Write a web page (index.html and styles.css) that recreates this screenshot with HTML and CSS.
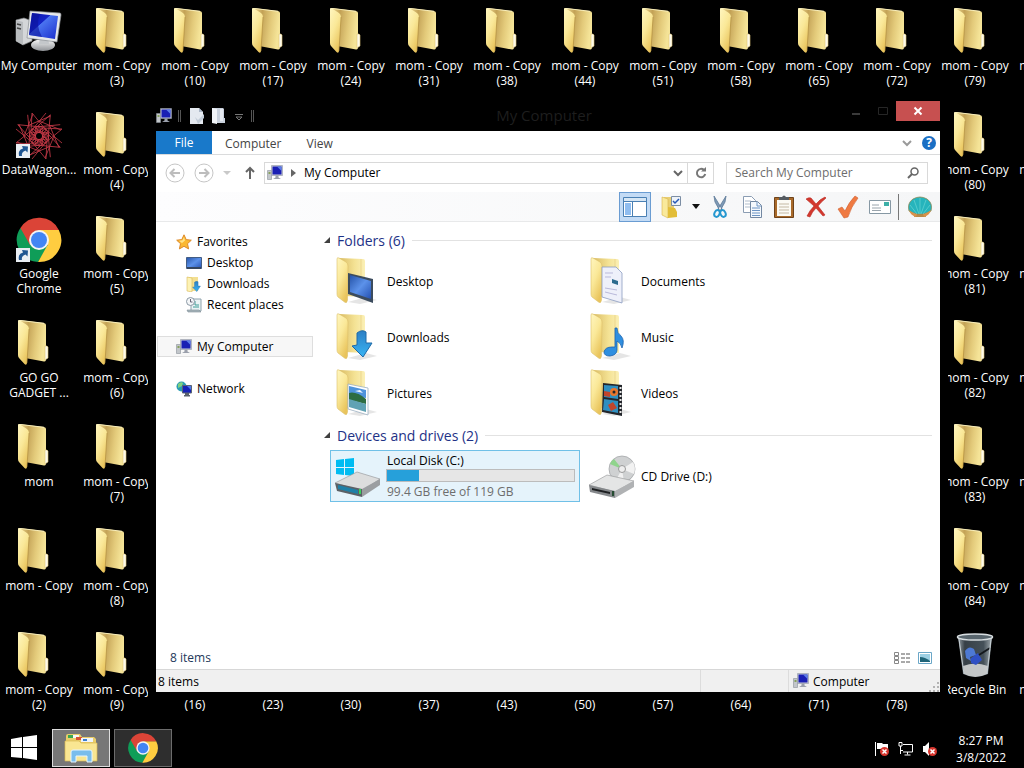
FILE: index.html
```
<!DOCTYPE html>
<html lang="en">
<head>
  <meta charset="UTF-8">
  <meta name="viewport" content="width=device-width, initial-scale=1.0">
  <title>My Computer</title>
  <link rel="stylesheet" href="styles.css">
</head>
<body>

  <!-- ICON SPRITE -->
  <svg class="sprite" width="0" height="0" aria-hidden="true">
    <defs>
      <linearGradient id="gFlap" x1="0" y1="0" x2=".6" y2="1">
        <stop offset="0" stop-color="#fff6c0"/><stop offset=".5" stop-color="#fae898"/><stop offset="1" stop-color="#e9c45c"/>
      </linearGradient>
      <linearGradient id="gBack" x1="0" y1="0" x2="1" y2=".2">
        <stop offset="0" stop-color="#f1dd96"/><stop offset=".35" stop-color="#c3a256"/><stop offset=".7" stop-color="#e3ca7a"/><stop offset="1" stop-color="#f5e498"/>
      </linearGradient>
      <linearGradient id="gBackLight" x1="0" y1="0" x2="1" y2="0">
        <stop offset="0" stop-color="#d9bb62"/><stop offset=".6" stop-color="#f4e294"/><stop offset="1" stop-color="#fbf0b6"/>
      </linearGradient>
      <linearGradient id="gScreen" x1="0" y1="0" x2="1" y2="1">
        <stop offset="0" stop-color="#0a14a8"/><stop offset=".4" stop-color="#1424c8"/><stop offset=".42" stop-color="#4a74f0"/><stop offset="1" stop-color="#1a2ccc"/>
      </linearGradient>
      <linearGradient id="gDesk" x1="0" y1="0" x2="1" y2="1">
        <stop offset="0" stop-color="#2553a8"/><stop offset=".5" stop-color="#5c92ea"/><stop offset="1" stop-color="#2450b0"/>
      </linearGradient>
      <linearGradient id="gSilver" x1="0" y1="0" x2="0" y2="1">
        <stop offset="0" stop-color="#fafafa"/><stop offset="1" stop-color="#8f9296"/>
      </linearGradient>
      <linearGradient id="gArrow" x1="0" y1="0" x2="0" y2="1">
        <stop offset="0" stop-color="#2c7fc4"/><stop offset="1" stop-color="#38b4f4"/>
      </linearGradient>
      <linearGradient id="gBin" x1="0" y1="0" x2="1" y2="0">
        <stop offset="0" stop-color="#a7b1b8"/><stop offset=".2" stop-color="#3d474f"/><stop offset=".75" stop-color="#4c5962"/><stop offset="1" stop-color="#b7c1c6"/>
      </linearGradient>
    </defs>

    <symbol id="folder" viewBox="0 0 48 48">
      <path d="M4 0 29 3Q31 3.500 31 5V39Q31 42 29 41.500L10 38z" fill="url(#gBack)"/>
      <path d="M4 .3 29 3.300" stroke="#f7edbb" stroke-width="1"/>
      <path d="M30 26h2l1 1v11l-3 2z" fill="#fdfaea" stroke="#e0c878" stroke-width=".6"/>
      <path d="M3 1Q3-.5 5 .5L12 5Q14 6.500 14 9L12 43Q11.500 46 9.500 44L4 38Q3 37 3 35z" fill="url(#gFlap)"/>
      <path d="M14 9 12 43" stroke="#a98739" stroke-width=".6"/>
    </symbol>

    <symbol id="folder-open" viewBox="0 0 48 48">
      <path d="M14 45 32 40 43 43 26 47z" fill="#d4d4d4" opacity=".6"/>
      <path d="M5 1 29 2Q31 2 31 4V40L11 39z" fill="url(#gBackLight)"/>
      <path d="M27 2v30" stroke="#e2cb7c" stroke-width=".6"/>
      <path d="M3 2Q3 0 5 1L12 5Q14 6.500 14 9L13.500 43Q13 47 10.500 45L4 40Q3 39 3 37z" fill="url(#gFlap)" stroke="#dcbf69" stroke-width=".6"/>
    </symbol>

    <symbol id="computer" viewBox="0 0 48 48">
      <path d="M1 12 9 10 17 13V33L8 37 1 33z" fill="#d4d6d8" stroke="#7f8285" stroke-width=".7"/>
      <path d="M1 12 8 14V37L1 33z" fill="#b9bcbf"/>
      <path d="M2 16l4 1M2 20l4 1" stroke="#444" stroke-width="1.4"/>
      <ellipse cx="28" cy="37" rx="12" ry="6" fill="url(#gSilver)"/>
      <path d="M25 29h8l1 7h-10z" fill="#c4c7ca"/>
      <path d="M15 3 45 5Q46 5 46 7L42 34 12 30z" fill="#e6e8ea" stroke="#888c90" stroke-width=".7"/>
      <path d="M17 5 43 8 40 31 14 27z" fill="url(#gScreen)"/>
      <path d="M17 5 25 6Q20 16 27 29L14 27z" fill="#0b149b" opacity=".6"/>
    </symbol>

    <symbol id="computer-sm" viewBox="0 0 16 16">
      <path d="M.5 5.500h4v9h-4z" fill="#c2c6ca" stroke="#8a9198" stroke-width=".6"/>
      <path d="M1.500 7h2v2h-2z" fill="#86a05c"/>
      <path d="M4.500.500h11v10h-11z" fill="#c9ccd6" stroke="#8f95a4" stroke-width=".6"/>
      <path d="M5.500 1.500h9v8h-9z" fill="#1a1fb4"/>
      <path d="M10 1.500h4.500v4.500z" fill="#5d7ee8"/>
      <path d="M8.500 10.500h3v2l2.500 1.500H6l2.500-1.500z" fill="#9ba0ac"/>
    </symbol>

    <symbol id="chrome" viewBox="0 0 48 48">
      <path d="M24 24 5.400 12A22 22 0 0 0 23 46L33 30z" fill="#0f9d58"/>
      <path d="M24 14H43.800A22 22 0 0 1 23 46L32.600 29z" fill="#ffcd40"/>
      <path d="M24 14H43.800A22 22 0 0 0 5.400 12L15 29z" fill="#db4437"/>
      <circle cx="24" cy="24" r="10" fill="#f4f4f4"/>
      <circle cx="24" cy="24" r="8" fill="#4285f4"/>
    </symbol>

    <symbol id="wagon" viewBox="0 0 48 48">
      <g fill="none" stroke="#c83a48" stroke-width=".8">
        <g id="ray">
          <path d="M17 1 31 18 24 28 16 20z"/>
          <path d="M31 1 17 18 24 28"/>
          <circle cx="24" cy="18" r="4"/>
          <path d="M24 9 46 18"/>
        </g>
        <use href="#ray" transform="rotate(45 24 24)"/>
        <use href="#ray" transform="rotate(90 24 24)"/>
        <use href="#ray" transform="rotate(135 24 24)"/>
        <use href="#ray" transform="rotate(180 24 24)"/>
        <use href="#ray" transform="rotate(225 24 24)"/>
        <use href="#ray" transform="rotate(270 24 24)"/>
        <use href="#ray" transform="rotate(315 24 24)"/>
      </g>
      <circle cx="24" cy="24" r="3" fill="#000"/>
    </symbol>

    <symbol id="shortcut-arrow" viewBox="0 0 14 14">
      <path d="M0 0h14v14H0z" fill="#e9eef3"/>
      <path d="M3 12Q1.500 6 7 4.500L6 2 12 2.500 11.500 8.500 9.500 6.500Q5 8 6 12z" fill="#1f5591"/>
    </symbol>

    <symbol id="bin" viewBox="0 0 48 48">
      <path d="M7 5 41 5 37 42Q24 48 12 42z" fill="url(#gBin)" opacity=".9"/>
      <path d="M12 34Q24 29 37 34L36 42Q24 48 13 42z" fill="#d2d4d4" opacity=".9"/>
      <path d="M14 19Q18 13 23 17L25 23 19 25 20 29 15 26z" fill="#4d79d4"/>
      <path d="M20 26 27 21 31 28 25 33 20 31z" fill="#2f50c4"/>
      <path d="M28 23 39 16" stroke="#14181c" stroke-width="2"/>
      <ellipse cx="24" cy="5" rx="17.500" ry="3" fill="#59666e" stroke="#d7dde0" stroke-width="1.500"/>
      <path d="M8 7 13 42M40 7 36 42" stroke="#c4cdd2" stroke-width="1" fill="none"/>
    </symbol>

    <symbol id="star" viewBox="0 0 16 16">
      <path d="M8 .8 10.200 5.600 15.300 6.200 11.500 9.700 12.600 14.900 8 12.300 3.400 14.900 4.500 9.700.7 6.200 5.800 5.600z" fill="#fbb830" stroke="#dd8a2b" stroke-width="1"/>
      <path d="M8 3 9 6.500 6 9 3 6.800 6.500 6.200z" fill="#ffe48a"/>
    </symbol>

    <symbol id="down-arrow" viewBox="0 0 22 28">
      <path d="M6 3Q11-1 15 2V13H21L12 27 1 16 6 15z" fill="url(#gArrow)" stroke="#1f6aa8" stroke-width="1"/>
    </symbol>
  </svg>

  <!-- DESKTOP -->
  <main class="desktop">
    <div class="column">
      <a class="shortcut" href="#"><svg class="icon"><use href="#computer"/></svg><span>My Computer</span></a>
      <a class="shortcut" href="#"><svg class="icon"><use href="#wagon"/></svg><svg class="badge"><use href="#shortcut-arrow"/></svg><span>DataWagon...</span></a>
      <a class="shortcut" href="#"><svg class="icon"><use href="#chrome"/></svg><svg class="badge"><use href="#shortcut-arrow"/></svg><span>Google<br>Chrome</span></a>
      <a class="shortcut" href="#"><svg class="icon"><use href="#folder"/></svg><span>GO GO<br>GADGET ...</span></a>
      <a class="shortcut" href="#"><svg class="icon"><use href="#folder"/></svg><span>mom</span></a>
      <a class="shortcut" href="#"><svg class="icon"><use href="#folder"/></svg><span>mom - Copy</span></a>
      <a class="shortcut" href="#"><svg class="icon"><use href="#folder"/></svg><span>mom - Copy (2)</span></a>
    </div>
    <div class="column">
      <a class="shortcut" href="#"><svg class="icon"><use href="#folder"/></svg><span>mom - Copy (3)</span></a>
      <a class="shortcut" href="#"><svg class="icon"><use href="#folder"/></svg><span>mom - Copy (4)</span></a>
      <a class="shortcut" href="#"><svg class="icon"><use href="#folder"/></svg><span>mom - Copy (5)</span></a>
      <a class="shortcut" href="#"><svg class="icon"><use href="#folder"/></svg><span>mom - Copy (6)</span></a>
      <a class="shortcut" href="#"><svg class="icon"><use href="#folder"/></svg><span>mom - Copy (7)</span></a>
      <a class="shortcut" href="#"><svg class="icon"><use href="#folder"/></svg><span>mom - Copy (8)</span></a>
      <a class="shortcut" href="#"><svg class="icon"><use href="#folder"/></svg><span>mom - Copy (9)</span></a>
    </div>
    <div class="column">
      <a class="shortcut" href="#"><svg class="icon"><use href="#folder"/></svg><span>mom - Copy (10)</span></a>
      <a class="shortcut low" href="#"><span>(16)</span></a>
    </div>
    <div class="column">
      <a class="shortcut" href="#"><svg class="icon"><use href="#folder"/></svg><span>mom - Copy (17)</span></a>
      <a class="shortcut low" href="#"><span>(23)</span></a>
    </div>
    <div class="column">
      <a class="shortcut" href="#"><svg class="icon"><use href="#folder"/></svg><span>mom - Copy (24)</span></a>
      <a class="shortcut low" href="#"><span>(30)</span></a>
    </div>
    <div class="column">
      <a class="shortcut" href="#"><svg class="icon"><use href="#folder"/></svg><span>mom - Copy (31)</span></a>
      <a class="shortcut low" href="#"><span>(37)</span></a>
    </div>
    <div class="column">
      <a class="shortcut" href="#"><svg class="icon"><use href="#folder"/></svg><span>mom - Copy (38)</span></a>
      <a class="shortcut low" href="#"><span>(43)</span></a>
    </div>
    <div class="column">
      <a class="shortcut" href="#"><svg class="icon"><use href="#folder"/></svg><span>mom - Copy (44)</span></a>
      <a class="shortcut low" href="#"><span>(50)</span></a>
    </div>
    <div class="column">
      <a class="shortcut" href="#"><svg class="icon"><use href="#folder"/></svg><span>mom - Copy (51)</span></a>
      <a class="shortcut low" href="#"><span>(57)</span></a>
    </div>
    <div class="column">
      <a class="shortcut" href="#"><svg class="icon"><use href="#folder"/></svg><span>mom - Copy (58)</span></a>
      <a class="shortcut low" href="#"><span>(64)</span></a>
    </div>
    <div class="column">
      <a class="shortcut" href="#"><svg class="icon"><use href="#folder"/></svg><span>mom - Copy (65)</span></a>
      <a class="shortcut low" href="#"><span>(71)</span></a>
    </div>
    <div class="column">
      <a class="shortcut" href="#"><svg class="icon"><use href="#folder"/></svg><span>mom - Copy (72)</span></a>
      <a class="shortcut low" href="#"><span>(78)</span></a>
    </div>
    <div class="column">
      <a class="shortcut" href="#"><svg class="icon"><use href="#folder"/></svg><span>mom - Copy (79)</span></a>
      <a class="shortcut" href="#"><svg class="icon"><use href="#folder"/></svg><span>mom - Copy (80)</span></a>
      <a class="shortcut" href="#"><svg class="icon"><use href="#folder"/></svg><span>mom - Copy (81)</span></a>
      <a class="shortcut" href="#"><svg class="icon"><use href="#folder"/></svg><span>mom - Copy (82)</span></a>
      <a class="shortcut" href="#"><svg class="icon"><use href="#folder"/></svg><span>mom - Copy (83)</span></a>
      <a class="shortcut" href="#"><svg class="icon"><use href="#folder"/></svg><span>mom - Copy (84)</span></a>
      <a class="shortcut" href="#"><svg class="icon"><use href="#bin"/></svg><span>Recycle Bin</span></a>
    </div>
    <div class="column">
      <a class="shortcut" href="#"><svg class="icon"><use href="#folder"/></svg><span>mom - Copy</span></a>
      <a class="shortcut" href="#"><svg class="icon"><use href="#folder"/></svg><span>mom - Copy</span></a>
      <a class="shortcut" href="#"><svg class="icon"><use href="#folder"/></svg><span>mom - Copy</span></a>
      <a class="shortcut" href="#"><svg class="icon"><use href="#folder"/></svg><span>mom - Copy</span></a>
      <a class="shortcut" href="#"><svg class="icon"><use href="#folder"/></svg><span>mom - Copy</span></a>
      <a class="shortcut" href="#"><svg class="icon"><use href="#folder"/></svg><span>mom - Copy</span></a>
      <a class="shortcut" href="#"><svg class="icon"><use href="#folder"/></svg><span>mom - Copy</span></a>
    </div>
  </main>

  <!-- EXPLORER WINDOW -->
  <section class="window">
    <header class="titlebar">
      <div class="quick">
        <svg width="16" height="16"><use href="#computer-sm"/></svg>
        <i class="grip"></i>
        <button aria-label="Properties"><svg width="16" height="16" viewBox="0 0 16 16"><path d="M1 0h9l4 4v12H1z" fill="#e4e9f0"/><path d="M10 0v4h4z" fill="#aab6c6"/><path d="M6 9l3 3 6-6v4l-6 6z" fill="#c2ccd8"/></svg></button>
        <button aria-label="New folder"><svg width="16" height="16" viewBox="0 0 16 16"><path d="M1 0h11l1 1v9h1v5H1z" fill="#c9d1dd"/><path d="M1 0l5 1v15l-5-1z" fill="#f0f3f7"/><path d="M9 1h3v12H9z" fill="#e4e9f0"/></svg></button>
        <button aria-label="Customize"><svg width="12" height="16" viewBox="2 0 12 16"><path d="M4 6.500h8M5 9l3 3 3-3z" fill="none" stroke="#777"/></svg></button>
        <i class="grip"></i>
      </div>
      <h1>My Computer</h1>
      <div class="controls">
        <button aria-label="Minimize"><svg width="10" height="10"><path d="M1 8h8" stroke="#3a3a3a" stroke-width="2"/></svg></button>
        <button aria-label="Maximize"><svg width="10" height="10"><path d="M.5 1.500h9v7h-9z" fill="none" stroke="#262626"/></svg></button>
        <button class="close" aria-label="Close"><svg width="10" height="10"><path d="M1.500 1.500l7 7M8.500 1.500l-7 7" stroke="#fff" stroke-width="2"/></svg></button>
      </div>
    </header>

    <nav class="tabs">
      <button class="file">File</button>
      <button>Computer</button>
      <button>View</button>
      <span class="tab-tools">
        <svg width="10" height="10"><path d="M1 3l4 4 4-4" fill="none" stroke="#9a9a9a" stroke-width="2"/></svg>
        <button class="help" aria-label="Help">?</button>
      </span>
    </nav>

    <div class="address-row">
      <button aria-label="Back"><svg width="20" height="20"><circle cx="10" cy="10" r="9" fill="none" stroke="#c6c6c6"/><path d="M15 10H6M9.500 6L5.500 10l4 4" fill="none" stroke="#bdbdbd" stroke-width="2"/></svg></button>
      <button aria-label="Forward"><svg width="20" height="20"><circle cx="10" cy="10" r="9" fill="none" stroke="#c6c6c6"/><path d="M5 10h9M10.500 6l4 4-4 4" fill="none" stroke="#bdbdbd" stroke-width="2"/></svg></button>
      <button aria-label="Recent locations"><svg width="8" height="6"><path d="M0 1h8L4 5z" fill="#c9c9c9"/></svg></button>
      <button class="up" aria-label="Up"><svg width="12" height="14"><path d="M6 13V2M2 6l4-4 4 4" fill="none" stroke="#666" stroke-width="2"/></svg></button>
      <div class="address">
        <svg width="16" height="16"><use href="#computer-sm"/></svg>
        <svg width="5" height="8"><path d="M0 0l5 4-5 4z" fill="#666"/></svg>
        <span class="path">My Computer</span>
        <button aria-label="Previous locations"><svg width="10" height="10"><path d="M1 3l4 4 4-4" fill="none" stroke="#666" stroke-width="2"/></svg></button>
        <button class="refresh" aria-label="Refresh"><svg width="12" height="12"><path d="M9 3A4.200 4.200 0 1 0 10.200 7" fill="none" stroke="#777" stroke-width="2"/><path d="M6 4.500h5V0z" fill="#777"/></svg></button>
      </div>
      <label class="search">
        <input type="text" placeholder="Search My Computer" aria-label="Search My Computer">
        <svg width="12" height="12"><circle cx="7.500" cy="4.500" r="3.500" fill="none" stroke="#666" stroke-width="1.500"/><path d="M5 7L1 11" stroke="#666" stroke-width="2"/></svg>
      </label>
    </div>

    <div class="toolbar">
      <button class="on" aria-label="Navigation pane"><svg width="24" height="24"><path d="M.5 2.500h23v19H.5z" fill="#fff" stroke="#4a80b4"/><path d="M1 3h22v3H1z" fill="#d6e6f4"/><path d="M1 6.500h22M9.500 7v14" stroke="#4a80b4"/><path d="M2 8h6v12H2z" fill="#8fbdf0"/></svg></button>
      <button aria-label="Folder options"><svg width="24" height="24"><path d="M4 2h10v18H4z" fill="#e9cf74"/><path d="M2 2l6 2v19l-6-3z" fill="#f9e99b" stroke="#d8b44c" stroke-width=".6"/><path d="M8 12l7 1 2 4v5l-9 1z" fill="#e2bd38"/><path d="M11.500 1.500h9v9h-9z" fill="#eef3f9" stroke="#7c8ea4"/><path d="M13 6l2 2 4-4" fill="none" stroke="#2558b8" stroke-width="1.500"/></svg></button>
      <button class="drop" aria-label="More options"><svg width="8" height="5"><path d="M0 0h8L4 5z" fill="#111"/></svg></button>
      <button aria-label="Cut"><svg width="24" height="24"><path d="M6 1l1 6 5 9 2-2zM18 1l-1 6-5 9-2-2z" fill="#7f9ab6" stroke="#5c7897" stroke-width=".8"/><ellipse cx="9" cy="18.500" rx="2.500" ry="3.500" fill="none" stroke="#2698d0" stroke-width="2" transform="rotate(25 9 18.500)"/><ellipse cx="15" cy="18.500" rx="2.500" ry="3.500" fill="none" stroke="#2698d0" stroke-width="2" transform="rotate(-25 15 18.500)"/></svg></button>
      <button aria-label="Copy"><svg width="24" height="24"><path d="M3.500 1.500h8l4 4v12h-12z" fill="#fff" stroke="#8b9db3"/><path d="M5 6h6M5 9h5M5 12h5" stroke="#b0bdcb"/><path d="M10.500 6.500h7l4 4v12h-11z" fill="#f5f9fd" stroke="#7388a2"/><path d="M17 7v4h4M12 13h8M12 15.500h8M12 18h8M12 20.500h8" fill="none" stroke="#6c94c4"/></svg></button>
      <button aria-label="Paste"><svg width="24" height="24"><path d="M2.500 2.500h19v20h-19z" fill="#a96a2a" stroke="#6e431b"/><path d="M5 5h14v16H5z" fill="#fbfaf4"/><path d="M7 9h10M7 12h10M7 15h10M7 18h10" stroke="#c4b9a4"/><path d="M7 2h3q2-3 4 0h3v3H7z" fill="#555b61"/></svg></button>
      <button aria-label="Delete"><svg width="24" height="24"><path d="M2 4q3-2 5-1l5 6Q16 4 21 2l1 1q-5 4-8 8l7 9-2 1-7-8q-4 4-6 9l-3-1q3-6 7-10z" fill="#d3382e" stroke="#b92a22" stroke-width=".6"/></svg></button>
      <button aria-label="Rename"><svg width="24" height="24"><path d="M2 14l4-2 3 4q4-9 10-15l3 2q-7 9-10 19l-4 1z" fill="#ef7a42" stroke="#cf6030" stroke-width=".6"/></svg></button>
      <button aria-label="Send by e-mail"><svg width="24" height="24"><path d="M1.500 5.500h21v13h-21z" fill="#fff" stroke="#8698a4"/><path d="M16 7h5v4h-5z" fill="#3db0a8"/><path d="M4 10h7M4 13h9M4 15.500h9" stroke="#99a4ac"/></svg></button>
      <i class="divider"></i>
      <button aria-label="Shell"><svg width="24" height="24"><path d="M7 18h10l1 4H6z" fill="#b98a48"/><path d="M8 19L1 16Q-1 8 5 4 12 0 19 4 25 8 23 16l-7 3z" fill="#26b4bc" stroke="#8c8a58" stroke-width=".8"/><path d="M12 19V3M11 19L6 5M13 19l5-14M9 19L2 10M15 19l7-9" fill="none" stroke="#5fd0d0" stroke-width=".8"/><path d="M1 15q5 4 8 4l-1 3q-6-2-7-7zM23 15q-5 4-8 4l1 3q6-2 7-7z" fill="#d9924a"/></svg></button>
    </div>

    <div class="content">
      <nav class="tree">
        <a href="#"><svg width="16" height="16"><use href="#star"/></svg>Favorites</a>
        <a class="sub" href="#"><svg width="16" height="16"><path d="M.5 2.500h15v11H.5z" fill="url(#gDesk)" stroke="#435d84"/><path d="M1 12h14v2H1z" fill="#35465f"/></svg>Desktop</a>
        <a class="sub" href="#"><svg width="16" height="16"><path d="M1 1h11v14H1z" fill="#f3df92"/><path d="M1 1l5 1v14l-5-1z" fill="#fdf2b4" stroke="#d8bb5c" stroke-width=".6"/><use href="#down-arrow" x="6" y="5" width="9" height="11"/></svg>Downloads</a>
        <a class="sub" href="#"><svg width="16" height="16"><path d="M5 2h10v12H5z" fill="#eaf3f4" stroke="#8fa2ac"/><path d="M1 13h12l2 2H2z" fill="#a9b7bd" stroke="#7c8c94" stroke-width=".6"/><path d="M9 4v4h4M7 10h6" fill="none" stroke="#3d9c96"/><circle cx="4.500" cy="4.500" r="4" fill="#f4f6f8" stroke="#8a98a4"/><path d="M4.500 2v3h2" fill="none" stroke="#667"/></svg>Recent places</a>
        <a class="group current" href="#"><svg width="16" height="16"><use href="#computer-sm"/></svg>My Computer</a>
        <a class="group" href="#"><svg width="16" height="16"><circle cx="5.500" cy="5.500" r="5" fill="#2a9cb4"/><path d="M2 3q3-3 5-1L6 5 2 7z" fill="#7fd07e"/><path d="M6.500 4.500h9v7.500h-9z" fill="#1622b8" stroke="#5a6474"/><path d="M11 5h4v4z" fill="#4c78ec"/><path d="M9 12h4v2H9zM8 14h6v1.500H8z" fill="#59616c"/></svg>Network</a>
      </nav>

      <div class="files">
        <h2><svg width="6" height="6"><path d="M6 0v6H0z" fill="#404040"/></svg>Folders (6)</h2>
        <div class="tiles">
          <a class="tile" href="#">
            <svg class="icon"><use href="#folder-open"/><path d="M14 16 39 22V46L14 37z" fill="#3c4c5e"/><path d="M16 18 37 24V42L16 35z" fill="url(#gDesk)"/></svg>
            <span>Desktop</span>
          </a>
          <a class="tile" href="#">
            <svg class="icon"><use href="#folder-open"/><path d="M14 10h14l6 6v30l-20-6z" fill="#eef0fa" stroke="#8c9cc0" stroke-width=".8"/><path d="M17 16h8M17 20h6M17 31l12 2M17 35l12 3" stroke="#b9b9da"/><path d="M24 22l6 2v4l-6-2z" fill="#2c6a8e"/></svg>
            <span>Documents</span>
          </a>
          <a class="tile" href="#">
            <svg class="icon"><use href="#folder-open"/><use href="#down-arrow" x="17" y="17" width="22" height="28"/></svg>
            <span>Downloads</span>
          </a>
          <a class="tile" href="#">
            <svg class="icon"><use href="#folder-open"/><path d="M27 15h2q0 5 4 8 4 4 1 12-1-5-5-7v9q0 5-7 6-6 0-6-4 1-5 8-5h3z" fill="#2f8fe0" stroke="#1b62ae" stroke-width=".8"/></svg>
            <span>Music</span>
          </a>
          <a class="tile" href="#">
            <svg class="icon"><use href="#folder-open"/><path d="M14 15l20 4v27l-20-6z" fill="#fff" stroke="#9cb0c2" stroke-width=".8"/><path d="M15 17l17 4v8l-17-2z" fill="#4f94dc"/><path d="M15 24q7-2 17 6v5l-17-4z" fill="#2d6d42"/><path d="M15 30l17 5v8l-17-5z" fill="#5fa2b4"/><path d="M21 22l5-1 3 3z" fill="#f1f8ff"/></svg>
            <span>Pictures</span>
          </a>
          <a class="tile" href="#">
            <svg class="icon"><use href="#folder-open"/><path d="M15 14l19 2v31l-20-4z" fill="#23262b"/><path d="M16 16l14 1v13l-14-2zM16 30l14 2v12l-15-3z" fill="#2f8fc0"/><circle cx="26" cy="23" r="4" fill="#e9762c"/><circle cx="26" cy="23" r="1.500" fill="#23262b"/><path d="M16 22l6 1v5l-6-1zM20 36l5-3 4 6-6 3z" fill="#c2452c"/><path d="M32.500 18v27" stroke="#e8e8e8" stroke-width="2" stroke-dasharray="2 2"/></svg>
            <span>Videos</span>
          </a>
        </div>

        <h2><svg width="6" height="6"><path d="M6 0v6H0z" fill="#404040"/></svg>Devices and drives (2)</h2>
        <div class="tiles">
          <a class="tile selected" href="#">
            <svg class="icon"><path d="M2 8l8-1v8H2zM11 7l9-1v9h-9zM2 16h8v7l-8-1zM11 16h9v8l-9-1z" fill="#00bcf2"/><path d="M1 31 23 20 46 27 28 39z" fill="#dcdddd" stroke="#8e9193" stroke-width=".6"/><path d="M1 31 28 37V45L3 39z" fill="#5b6166"/><path d="M4 33 24 38V42L4 37z" fill="#1f7fa6"/><path d="M28 37 46 27V33L28 45z" fill="#9b9ea1"/><path d="M25 37h2v5h-2z" fill="#37d25c"/></svg>
            <span class="drive">
              <span>Local Disk (C:)</span>
              <span class="meter"><i style="width: 17%"></i></span>
              <span class="free">99.4 GB free of 119 GB</span>
            </span>
          </a>
          <a class="tile" href="#">
            <svg class="icon"><circle cx="34" cy="17" r="13" fill="#cfd1d2" stroke="#a4a7a9" stroke-width=".8"/><path d="M34 17 22 12Q23 9 26 7z" fill="#8fd48c"/><path d="M34 17 45 10Q48 15 46 22z" fill="#f2f2f2"/><path d="M34 17 28 28 36 30z" fill="#f0f0f0"/><circle cx="34" cy="17" r="3.500" fill="#eee" stroke="#999"/><path d="M1 33 19 23 46 29 27 40z" fill="#e4e5e5" stroke="#909294" stroke-width=".6"/><path d="M1 33 27 39V46L2 40z" fill="#85888b"/><path d="M4 36 22 40v2L4 38z" fill="#1d1f21"/><path d="M27 39 46 29V35L27 46z" fill="#b0b2b4"/><path d="M24 39h2v5h-2z" fill="#254c31"/></svg>
            <span>CD Drive (D:)</span>
          </a>
        </div>
      </div>
    </div>

    <div class="details">
      <span>8 items</span>
      <span class="views">
        <button aria-label="Details view"><svg width="16" height="12"><path d="M.5.5h4v3h-4zM.5 4.500h4v3h-4zM.5 8.500h4v3h-4z" fill="#fff" stroke="#888"/><path d="M7 2h9M7 6h9M7 10h9" stroke="#555" stroke-dasharray="4 1"/></svg></button>
        <button aria-label="Icon view"><svg width="14" height="12"><path d="M.5.5h13v11H.5z" fill="#fff" stroke="#6aa7c8"/><path d="M2 2h10v8H2z" fill="#9cd0e4"/><path d="M2 5q5 0 10 4v1H2z" fill="#1f6478"/></svg></button>
      </span>
    </div>

    <footer class="status">
      <span class="count">8 items</span>
      <span class="cell"></span>
      <span class="zone"><svg width="16" height="16"><use href="#computer-sm"/></svg>Computer</span>
      <svg width="10" height="10"><path d="M8 0h2v2H8zM4 4h2v2H4zM8 4h2v2H8zM0 8h2v2H0zM4 8h2v2H4zM8 8h2v2H8z" fill="#b4b4b4"/></svg>
    </footer>
  </section>

  <!-- TASKBAR -->
  <footer class="taskbar">
    <button class="start" aria-label="Start"><svg width="26" height="26"><path d="M0 4l11-2v10H0zM12 2l14-2v12H12zM0 13h11v10L0 22zM12 13h14v12l-14-2z" fill="#fff"/></svg></button>
    <button class="task active" aria-label="File Explorer"><svg width="34" height="30"><path d="M2 3q0-2 2-2h12l2 3h12l2 2v21H2z" fill="#e9cd6a"/><path d="M4 2h5v3H4z" fill="#39a852"/><path d="M9 2h6v3H9z" fill="#f7f7f7"/><path d="M12 4h6v3h-6z" fill="#d85134"/><path d="M17 5h12v4H17z" fill="#eef4fb"/><path d="M19 6h4v2h-4z" fill="#3b7fd0"/><path d="M1 8h14l2 2h16v18H1z" fill="#f9e692" stroke="#d9b850" stroke-width=".7"/><path d="M7 29V19q0-2 2-2h17q2 0 2 2v10h-5v-6H12v6z" fill="#79bdec" stroke="#e6f5ff"/></svg></button>
    <button class="task" aria-label="Google Chrome"><svg width="32" height="32"><use href="#chrome"/></svg></button>
    <div class="tray">
      <svg width="16" height="16"><path d="M1.500 1v14" stroke="#fff"/><path d="M3 2h5l1 1h5v6H9L8 8H3z" fill="#fff"/><circle cx="10.500" cy="10.500" r="4.500" fill="#d8362e"/><path d="M8.500 8.500l4 4M12.500 8.500l-4 4" stroke="#fff" stroke-width="1.500"/></svg>
      <svg width="16" height="16"><path d="M5 3.500h9.500v7.500H5M9.500 11v2.500M6.500 14h6M2.500 5v8M2.500 9.500H5" fill="none" stroke="#fff"/><path d="M1 1.500h3v3.500H1z" fill="none" stroke="#fff"/></svg>
      <svg width="16" height="16"><path d="M1 5h2l4-4v14l-4-4H1z" fill="#fff"/><circle cx="10.500" cy="10.500" r="4.500" fill="#d8362e"/><path d="M8.500 8.500l4 4M12.500 8.500l-4 4" stroke="#fff" stroke-width="1.500"/></svg>
    </div>
    <div class="clock">8:27 PM<br>3/8/2022</div>
  </footer>

</body>
</html>
```
FILE: styles.css
```
* {
  box-sizing: border-box;
}

body {
  margin: 0;
  height: 100vh;
  display: flex;
  flex-direction: column;
  overflow: hidden;
  background: #000;
  color: #000;
  font-family: "Open Sans", "Noto Sans", sans-serif;
  font-size: 12px;
  line-height: 15px;
}

svg {
  display: block;
  flex: none;
}

a {
  color: inherit;
  text-decoration: none;
}

button {
  display: flex;
  align-items: center;
  justify-content: center;
  padding: 0;
  border: none;
  background: none;
  color: inherit;
  font: inherit;
}

.sprite {
  position: absolute;
}

.icon {
  width: 48px;
  height: 48px;
}

/* desktop */
.desktop {
  flex: 1;
  min-height: 0;
  display: flex;
  overflow: hidden;
}

.column {
  flex: none;
  width: 78px;
  display: flex;
  flex-direction: column;
}

.shortcut {
  position: relative;
  height: 104px;
  padding-top: 8px;
  display: flex;
  flex-direction: column;
  align-items: center;
  gap: 2px;
  color: #fff;
  text-align: center;
}

.shortcut.low {
  margin-top: auto;
  height: 31px;
  padding: 0;
}

.badge {
  position: absolute;
  left: 16px;
  top: 40px;
  width: 14px;
  height: 14px;
}

/* window */
.window {
  position: absolute;
  top: 100px;
  right: 76px;
  bottom: 68px;
  left: 148px;
  display: flex;
  flex-direction: column;
  padding: 0 8px 8px;
  background: #000;
}

.titlebar {
  height: 31px;
  display: grid;
  grid-template-columns: 1fr auto 1fr;
  align-items: center;
}

.titlebar h1 {
  margin: 0;
  padding-right: 8px;
  color: #1e1e1e;
  font-size: 15px;
  font-weight: normal;
}

.quick {
  display: flex;
  align-items: center;
  gap: 6px;
}

.grip {
  width: 3px;
  height: 12px;
  border: solid #555;
  border-width: 0 1px;
}

.quick .grip:nth-of-type(1) {
  margin-right: 2px;
}

.controls {
  align-self: start;
  justify-self: end;
  display: flex;
  padding-top: 1px;
}

.controls button {
  width: 27px;
  height: 20px;
}

.controls .close {
  width: 44px;
  background: #c75050;
}

.tabs {
  height: 24px;
  display: flex;
  background: #fff;
  border-bottom: 1px solid #dadbdc;
  color: #444;
}

.tabs button {
  padding: 2px 12px 0 13px;
}

.tabs .file {
  width: 56px;
  padding: 0;
  background: #1979ca;
  color: #fff;
}

.tab-tools {
  margin-left: auto;
  padding-right: 4px;
  display: flex;
  align-items: center;
  gap: 10px;
}

.tab-tools .help {
  width: 14px;
  height: 14px;
  padding: 0;
  border-radius: 50%;
  background: #1a6fc4;
  color: #fff;
  font-weight: bold;
}

.address-row {
  height: 37px;
  padding: 0 12px 2px 9px;
  display: flex;
  align-items: center;
  gap: 9px;
  background: #fff;
}

.address-row .up {
  margin: 0 -1px 0 4px;
}

.address {
  flex: 1;
  height: 22px;
  padding-left: 2px;
  display: flex;
  align-items: center;
  gap: 8px;
  border: 1px solid #d9d9d9;
}

.path {
  flex: 1;
}

.address .refresh {
  width: 26px;
  height: 20px;
  margin-left: -4px;
  border-left: 1px solid #d9d9d9;
}

.search {
  width: 202px;
  height: 22px;
  margin-left: 3px;
  padding: 0 8px;
  display: flex;
  align-items: center;
  border: 1px solid #d9d9d9;
}

.search input {
  flex: 1;
  min-width: 0;
  padding: 0;
  border: none;
  outline: none;
  font: inherit;
}

.search input::placeholder {
  color: #6d6d6d;
}

.toolbar {
  height: 30px;
  padding-right: 4px;
  display: flex;
  align-items: center;
  justify-content: flex-end;
  background: linear-gradient(to right, #fdfdfe, #f5f6f7);
  border-bottom: 1px solid #e8e9ea;
}

.toolbar button {
  width: 32px;
  height: 30px;
}

.toolbar .on {
  margin-right: 5px;
  background: #c3dbf5;
  border: 1px solid #6a9cd2;
}

.toolbar .drop {
  width: 16px;
}

.divider {
  width: 1px;
  height: 26px;
  margin: 0 5px 0 2px;
  background: #777;
}

.content {
  flex: 1;
  min-height: 0;
  display: flex;
  background: #fff;
}

.tree {
  width: 157px;
  padding: 9px 0 0 1px;
}

.tree a {
  height: 21px;
  padding-left: 19px;
  display: flex;
  align-items: center;
  gap: 5px;
}

.tree .sub {
  padding-left: 29px;
}

.tree .group {
  margin-top: 21px;
}

.tree .current {
  padding-left: 18px;
  background: #f7f7f7;
  border: 1px solid #dedede;
}

.files {
  flex: 1;
  padding: 8px 8px 0 11px;
}

.files h2 {
  margin: 0;
  height: 20px;
  display: flex;
  align-items: center;
  gap: 7px;
  color: #1e3287;
  font-size: 14px;
  font-weight: normal;
}

.files h2::after {
  content: "";
  flex: 1;
  height: 1px;
  background: #e2e2e2;
}

.tiles {
  display: grid;
  grid-template-columns: repeat(auto-fill, 250px);
  gap: 4px;
  padding: 5px 0 6px 6px;
}

.tile {
  height: 52px;
  padding: 1px 4px;
  display: flex;
  align-items: center;
  gap: 5px;
}

.tile.selected {
  padding: 0 4px 0 3px;
  background: #e5f3fb;
  border: 1px solid #70c0e7;
}

.drive {
  flex: 1;
  display: flex;
  flex-direction: column;
}

.meter {
  height: 13px;
  margin: 1px 0 2px -1px;
  background: #e6e6e6;
  border: 1px solid #bcbcbc;
}

.meter i {
  display: block;
  height: 100%;
  background: #26a0da;
}

.free {
  color: #6d6d6d;
}

.details {
  height: 23px;
  padding: 0 8px 0 14px;
  display: flex;
  align-items: center;
  justify-content: space-between;
  background: #fff;
  color: #1e395b;
}

.views {
  display: flex;
  gap: 8px;
}

.status {
  height: 23px;
  padding-right: 1px;
  display: flex;
  background: #f0f0f0;
  border-top: 1px solid #d7d7d7;
  line-height: 23px;
}

.status .count {
  flex: 1;
  padding-left: 2px;
}

.status > svg {
  align-self: flex-end;
}

.cell {
  width: 88px;
  border-left: 1px solid #dcdcdc;
}

.zone {
  width: 141px;
  padding-left: 4px;
  display: flex;
  align-items: center;
  gap: 4px;
  border-left: 1px solid #dcdcdc;
}

/* taskbar */
.taskbar {
  height: 40px;
  padding: 0 18px 0 11px;
  display: flex;
  align-items: center;
  color: #fff;
}

.start {
  margin-right: 15px;
}

.task {
  width: 58px;
  height: 38px;
  margin-right: 4px;
  background: #2e2e2e;
  border: 1px solid #6c6c6c;
}

.task.active {
  background: #777;
  border-color: #ddd;
}

.tray {
  margin-left: auto;
  padding-top: 2px;
  display: flex;
  gap: 8px;
}

.clock {
  margin-left: 18px;
  padding-top: 2px;
  text-align: center;
  line-height: 17px;
}
```
